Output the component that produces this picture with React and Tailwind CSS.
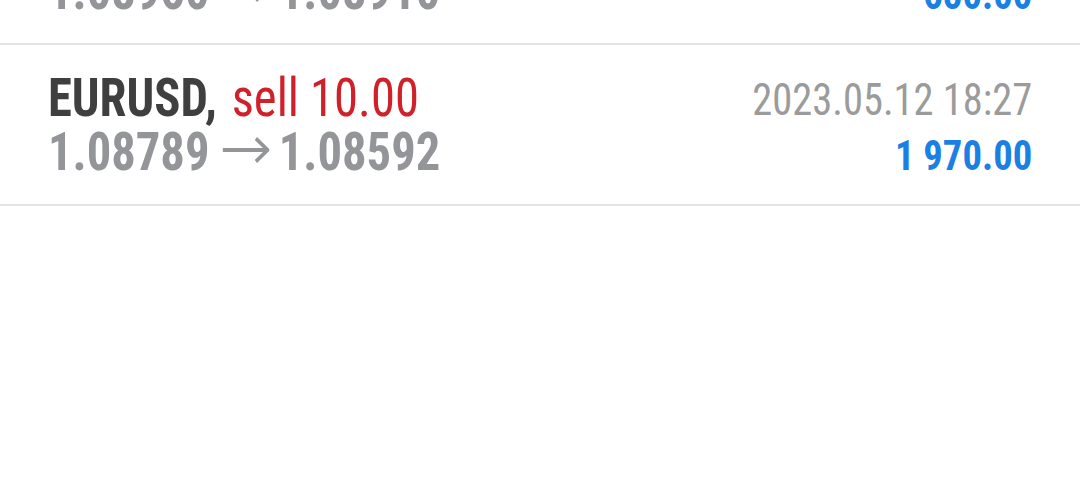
import React from "react";

const font = { fontFamily: "Roboto, 'Liberation Sans', sans-serif", fontStretch: "condensed" };

const trades = [
  { symbol: "GBPUSD", side: "buy", lots: "10.00", open: "1.08960", close: "1.08910", time: "2023.05.12 18:20", profit: "650.00" },
  { symbol: "EURUSD", side: "sell", lots: "10.00", open: "1.08789", close: "1.08592", time: "2023.05.12 18:27", profit: "1 970.00" },
];

const Arrow = () => (
  <svg width="52" height="26" viewBox="0 0 52 26" className="mb-[4px] ml-[15px] mr-[10px] shrink-0">
    <path d="M0 13H49" stroke="#939598" strokeWidth="3.8" fill="none" />
    <path d="M37 1.5L50 13L37 24.5" stroke="#939598" strokeWidth="3.8" fill="none" />
  </svg>
);

function TradeRow({ t }) {
  return (
    <div className="flex h-[161px] justify-between border-b-[2px] border-[#e4e4e4] pl-[48px] pr-[48px] pt-[26px]">
      <div className="flex origin-left scale-x-[0.9] flex-col">
        <div className="h-[54px] whitespace-nowrap text-[54px] leading-[54px]">
          <span className="font-bold text-[#3f3f3f]">{t.symbol},</span>{" "}
          <span className={t.side === "sell" ? "ml-[4px] text-[#d0212a]" : "ml-[4px] text-[#1b7fe3]"}>
            {t.side} {t.lots}
          </span>
        </div>
        <div className="flex h-[54px] items-center whitespace-nowrap text-[54px] font-bold leading-[54px] text-[#939598]">
          <span>{t.open}</span>
          <Arrow />
          <span>{t.close}</span>
        </div>
      </div>
      <div className="flex origin-right scale-x-[0.92] flex-col items-end pt-[2px]">
        <div className="whitespace-nowrap text-[44px] leading-[54px] text-[#9b9b9b]">{t.time}</div>
        <div className="whitespace-nowrap text-[42px] font-bold leading-[58px] text-[#1b7fe3]">{t.profit}</div>
      </div>
    </div>
  );
}

export default function App() {
  return (
    <div className="h-[480px] w-[1080px] overflow-hidden bg-white" style={font}>
      <div className="-mt-[116px]">
        {trades.map((t) => (
          <TradeRow key={t.symbol} t={t} />
        ))}
      </div>
    </div>
  );
}
